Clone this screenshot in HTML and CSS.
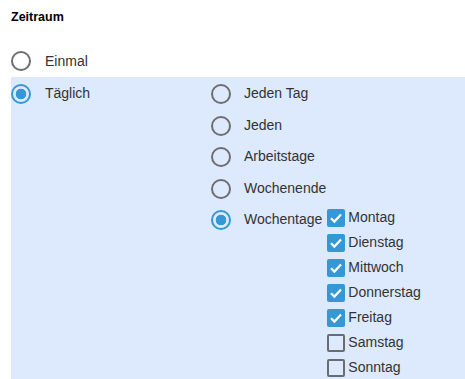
FILE: index.html
```html
<!DOCTYPE html>
<html lang="de">
<head>
  <meta charset="UTF-8" />
  <meta name="viewport" content="width=device-width, initial-scale=1.0"/>
  <title>Zeitraum</title>
  <link rel="stylesheet" href="styles.css">
</head>
<body>
  <div class="zeitraum">
    <h2 class="title">Zeitraum</h2>

    <div class="option">
      <span class="radio"></span>
      <span class="label">Einmal</span>
    </div>

    <div class="panel">
      <div class="col-left">
        <div class="option">
          <span class="radio checked"></span>
          <span class="label">Täglich</span>
        </div>
      </div>

      <div class="col-right">
        <div class="option"><span class="radio"></span><span class="label">Jeden Tag</span></div>
        <div class="option"><span class="radio"></span><span class="label">Jeden</span></div>
        <div class="option"><span class="radio"></span><span class="label">Arbeitstage</span></div>
        <div class="option"><span class="radio"></span><span class="label">Wochenende</span></div>
        <div class="option">
          <span class="radio checked"></span>
          <span class="label">Wochentage</span>
          <div class="days">
            <div class="day"><span class="box checked"><svg viewBox="0 0 18 18"><path d="M4 9.2 L7.4 12.6 L14 5.6"/></svg></span><span class="day-label">Montag</span></div>
            <div class="day"><span class="box checked"><svg viewBox="0 0 18 18"><path d="M4 9.2 L7.4 12.6 L14 5.6"/></svg></span><span class="day-label">Dienstag</span></div>
            <div class="day"><span class="box checked"><svg viewBox="0 0 18 18"><path d="M4 9.2 L7.4 12.6 L14 5.6"/></svg></span><span class="day-label">Mittwoch</span></div>
            <div class="day"><span class="box checked"><svg viewBox="0 0 18 18"><path d="M4 9.2 L7.4 12.6 L14 5.6"/></svg></span><span class="day-label">Donnerstag</span></div>
            <div class="day"><span class="box checked"><svg viewBox="0 0 18 18"><path d="M4 9.2 L7.4 12.6 L14 5.6"/></svg></span><span class="day-label">Freitag</span></div>
            <div class="day"><span class="box"></span><span class="day-label">Samstag</span></div>
            <div class="day"><span class="box"></span><span class="day-label">Sonntag</span></div>
          </div>
        </div>
      </div>
    </div>
  </div>
</body>
</html>
```

FILE: styles.css
```css
html, body {
  margin: 0;
  overflow: hidden;
}
body {
  font-family: "Liberation Sans", Arial, sans-serif;
  font-size: 14px;
  color: #333;
  background: #fff;
}
.zeitraum {
  padding: 10px 0 0 11px;
}
.title {
  margin: 0 0 21.5px;
  font-size: 12.5px;
  line-height: 14px;
  font-weight: bold;
  color: #000;
}
.option {
  display: flex;
  align-items: flex-start;
  min-height: 31.5px;
}
.label {
  line-height: 31.5px;
  margin-left: 14px;
  white-space: nowrap;
}
.col-right .label {
  margin-left: 13px;
}
.radio {
  width: 20px;
  height: 20px;
  margin-top: 5.75px;
  box-sizing: border-box;
  border: 2px solid #6e6e6e;
  border-radius: 50%;
  flex-shrink: 0;
}
.radio.checked {
  border-color: #3598d4;
  background: radial-gradient(circle, #3598d4 0, #3598d4 5px, transparent 5.6px);
}
.panel {
  display: flex;
  background: #dde9fc;
  padding-top: 1.25px;
}
.col-left {
  width: 200px;
}
.col-right {
  flex: 1;
}
.days {
  margin: 1px 0 0 5px;
}
.day {
  display: flex;
  align-items: center;
  height: 25px;
}
.box {
  width: 18px;
  height: 18px;
  box-sizing: border-box;
  border: 2px solid #686c74;
  border-radius: 2px;
  flex-shrink: 0;
}
.box.checked {
  border: none;
  background: #3598d4;
}
.box svg {
  display: block;
  width: 18px;
  height: 18px;
  fill: none;
  stroke: #fff;
  stroke-width: 2.2;
}
.day-label {
  margin-left: 3px;
  line-height: 25px;
}
```
